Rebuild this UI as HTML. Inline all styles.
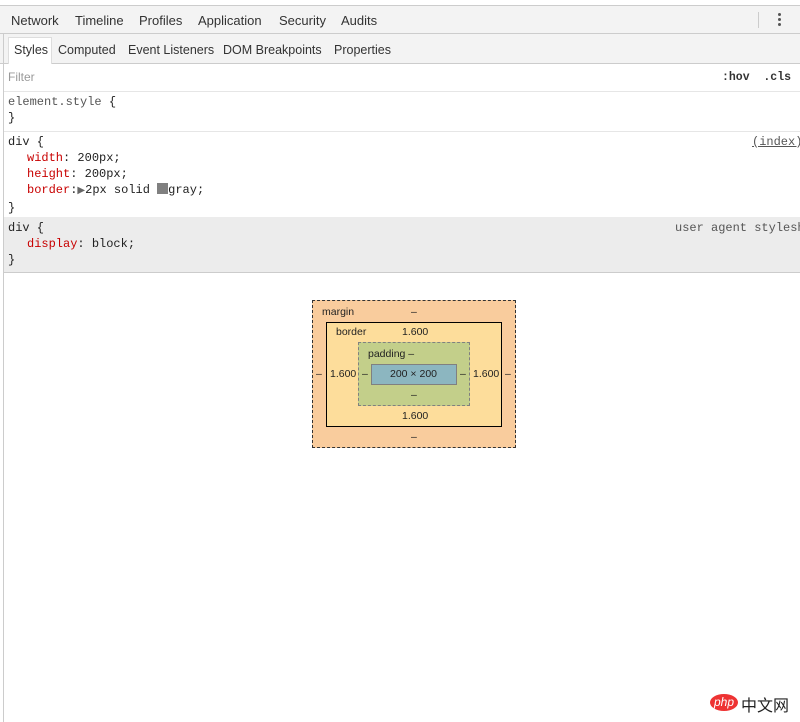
<!DOCTYPE html>
<html><head><style>
body{margin:0;width:800px;height:722px;background:#fff;font-family:"Liberation Sans",sans-serif;position:relative;overflow:hidden}
.a{position:absolute}
.top{left:0;top:5px;width:800px;height:29px;background:#f3f3f3;border-top:1px solid #ccc;border-bottom:1px solid #ccc;box-sizing:border-box}
.top span{position:absolute;top:7px;font-size:13px;color:#333}
.tabs{left:0;top:34px;width:800px;height:30px;background:#f3f3f3;border-bottom:1px solid #ccc;box-sizing:border-box}
.tabs span{position:absolute;top:9px;font-size:12.5px;color:#333}
.mono{font-family:"Liberation Mono",monospace;font-size:12px;color:#222;white-space:pre;line-height:16px}
.r{color:#c80000}
.i{display:inline-block;width:19px}
.bm{font-size:10.5px;color:#222;position:absolute}
</style></head><body>
<div class="a top">
<span style="left:11px">Network</span><span style="left:75px">Timeline</span><span style="left:139px">Profiles</span><span style="left:198px">Application</span><span style="left:279px">Security</span><span style="left:341px">Audits</span>
<div class="a" style="left:758px;top:6px;width:1px;height:16px;background:#ccc"></div>
<div class="a" style="left:778px;top:7px;width:3px;height:3px;border-radius:2px;background:#555;box-shadow:0 5px 0 #555,0 10px 0 #555"></div>
</div>
<div class="a tabs">
<div class="a" style="left:8px;top:3px;width:44px;height:27px;background:#fff;border:1px solid #ddd;border-bottom:none;box-sizing:border-box"></div>
<span style="left:14px">Styles</span><span style="left:58px">Computed</span><span style="left:128px">Event Listeners</span><span style="left:223px">DOM Breakpoints</span><span style="left:334px">Properties</span>
</div>
<div class="a" style="left:3px;top:34px;width:1px;height:688px;background:#ccc"></div>
<div class="a" style="left:4px;top:64px;width:796px;height:28px;border-bottom:1px solid #e6e6e6;box-sizing:border-box"></div>
<div class="a" style="left:8px;top:70px;font-size:12px;color:#999">Filter</div>
<div class="a mono" style="left:722px;top:70px;font-weight:bold;color:#333;font-size:11.5px">:hov  .cls</div>
<div class="a mono" style="left:8px;top:94px"><span style="color:#555">element.style</span> {
}</div>
<div class="a" style="left:4px;top:131px;width:796px;height:1px;background:#e6e6e6"></div>
<div class="a mono" style="left:8px;top:134px">div {
<span class="i"></span><span class="r">width</span>: 200px;
<span class="i"></span><span class="r">height</span>: 200px;
<span class="i"></span><span class="r">border</span>:<span style="color:#666;font-size:10px">▶</span>2px solid <span style="display:inline-block;width:11px;height:11px;background:#808080;vertical-align:-1px"></span>gray;
}</div>
<div class="a mono" style="left:752px;top:134px;color:#555;text-decoration:underline">(index)</div>
<div class="a" style="left:4px;top:217px;width:796px;height:55px;background:#ececec;border-bottom:1px solid #ccc"></div>
<div class="a mono" style="left:8px;top:220px">div {
<span class="i"></span><span class="r">display</span>: block;
}</div>
<div class="a mono" style="left:675px;top:220px;color:#555">user agent stylesh</div>
<div class="a" style="left:312px;top:300px;width:204px;height:148px;background:#f9cc9d;border:1px dashed #333;box-sizing:border-box"></div>
<div class="a" style="left:326px;top:322px;width:176px;height:105px;background:#fddd9b;border:1px solid #000;box-sizing:border-box"></div>
<div class="a" style="left:358px;top:342px;width:112px;height:64px;background:#c3cf8a;border:1px dashed #808080;box-sizing:border-box"></div>
<div class="a" style="left:371px;top:364px;width:86px;height:21px;background:#8cb6c0;border:1px solid #808080;box-sizing:border-box"></div>
<span class="bm" style="left:322px;top:306px">margin</span><span class="bm" style="left:411px;top:306px">–</span>
<span class="bm" style="left:336px;top:326px">border</span><span class="bm" style="left:402px;top:326px">1.600</span>
<span class="bm" style="left:368px;top:348px">padding –</span>
<span class="bm" style="left:390px;top:368px">200 × 200</span>
<span class="bm" style="left:316px;top:368px">–</span><span class="bm" style="left:330px;top:368px">1.600</span><span class="bm" style="left:362px;top:368px">–</span>
<span class="bm" style="left:460px;top:368px">–</span><span class="bm" style="left:473px;top:368px">1.600</span><span class="bm" style="left:505px;top:368px">–</span>
<span class="bm" style="left:411px;top:389px">–</span>
<span class="bm" style="left:402px;top:410px">1.600</span>
<span class="bm" style="left:411px;top:431px">–</span>
<div class="a" style="left:710px;top:694px;width:28px;height:17px;border-radius:50%;background:#e33;color:#fff;font-size:12px;font-style:italic;text-align:center;line-height:16px">php</div>
<div class="a" style="left:741px;top:692px;font-size:16px;color:#222;font-family:'Liberation Sans','Noto Sans CJK SC',sans-serif">中文网</div>
</body></html>
